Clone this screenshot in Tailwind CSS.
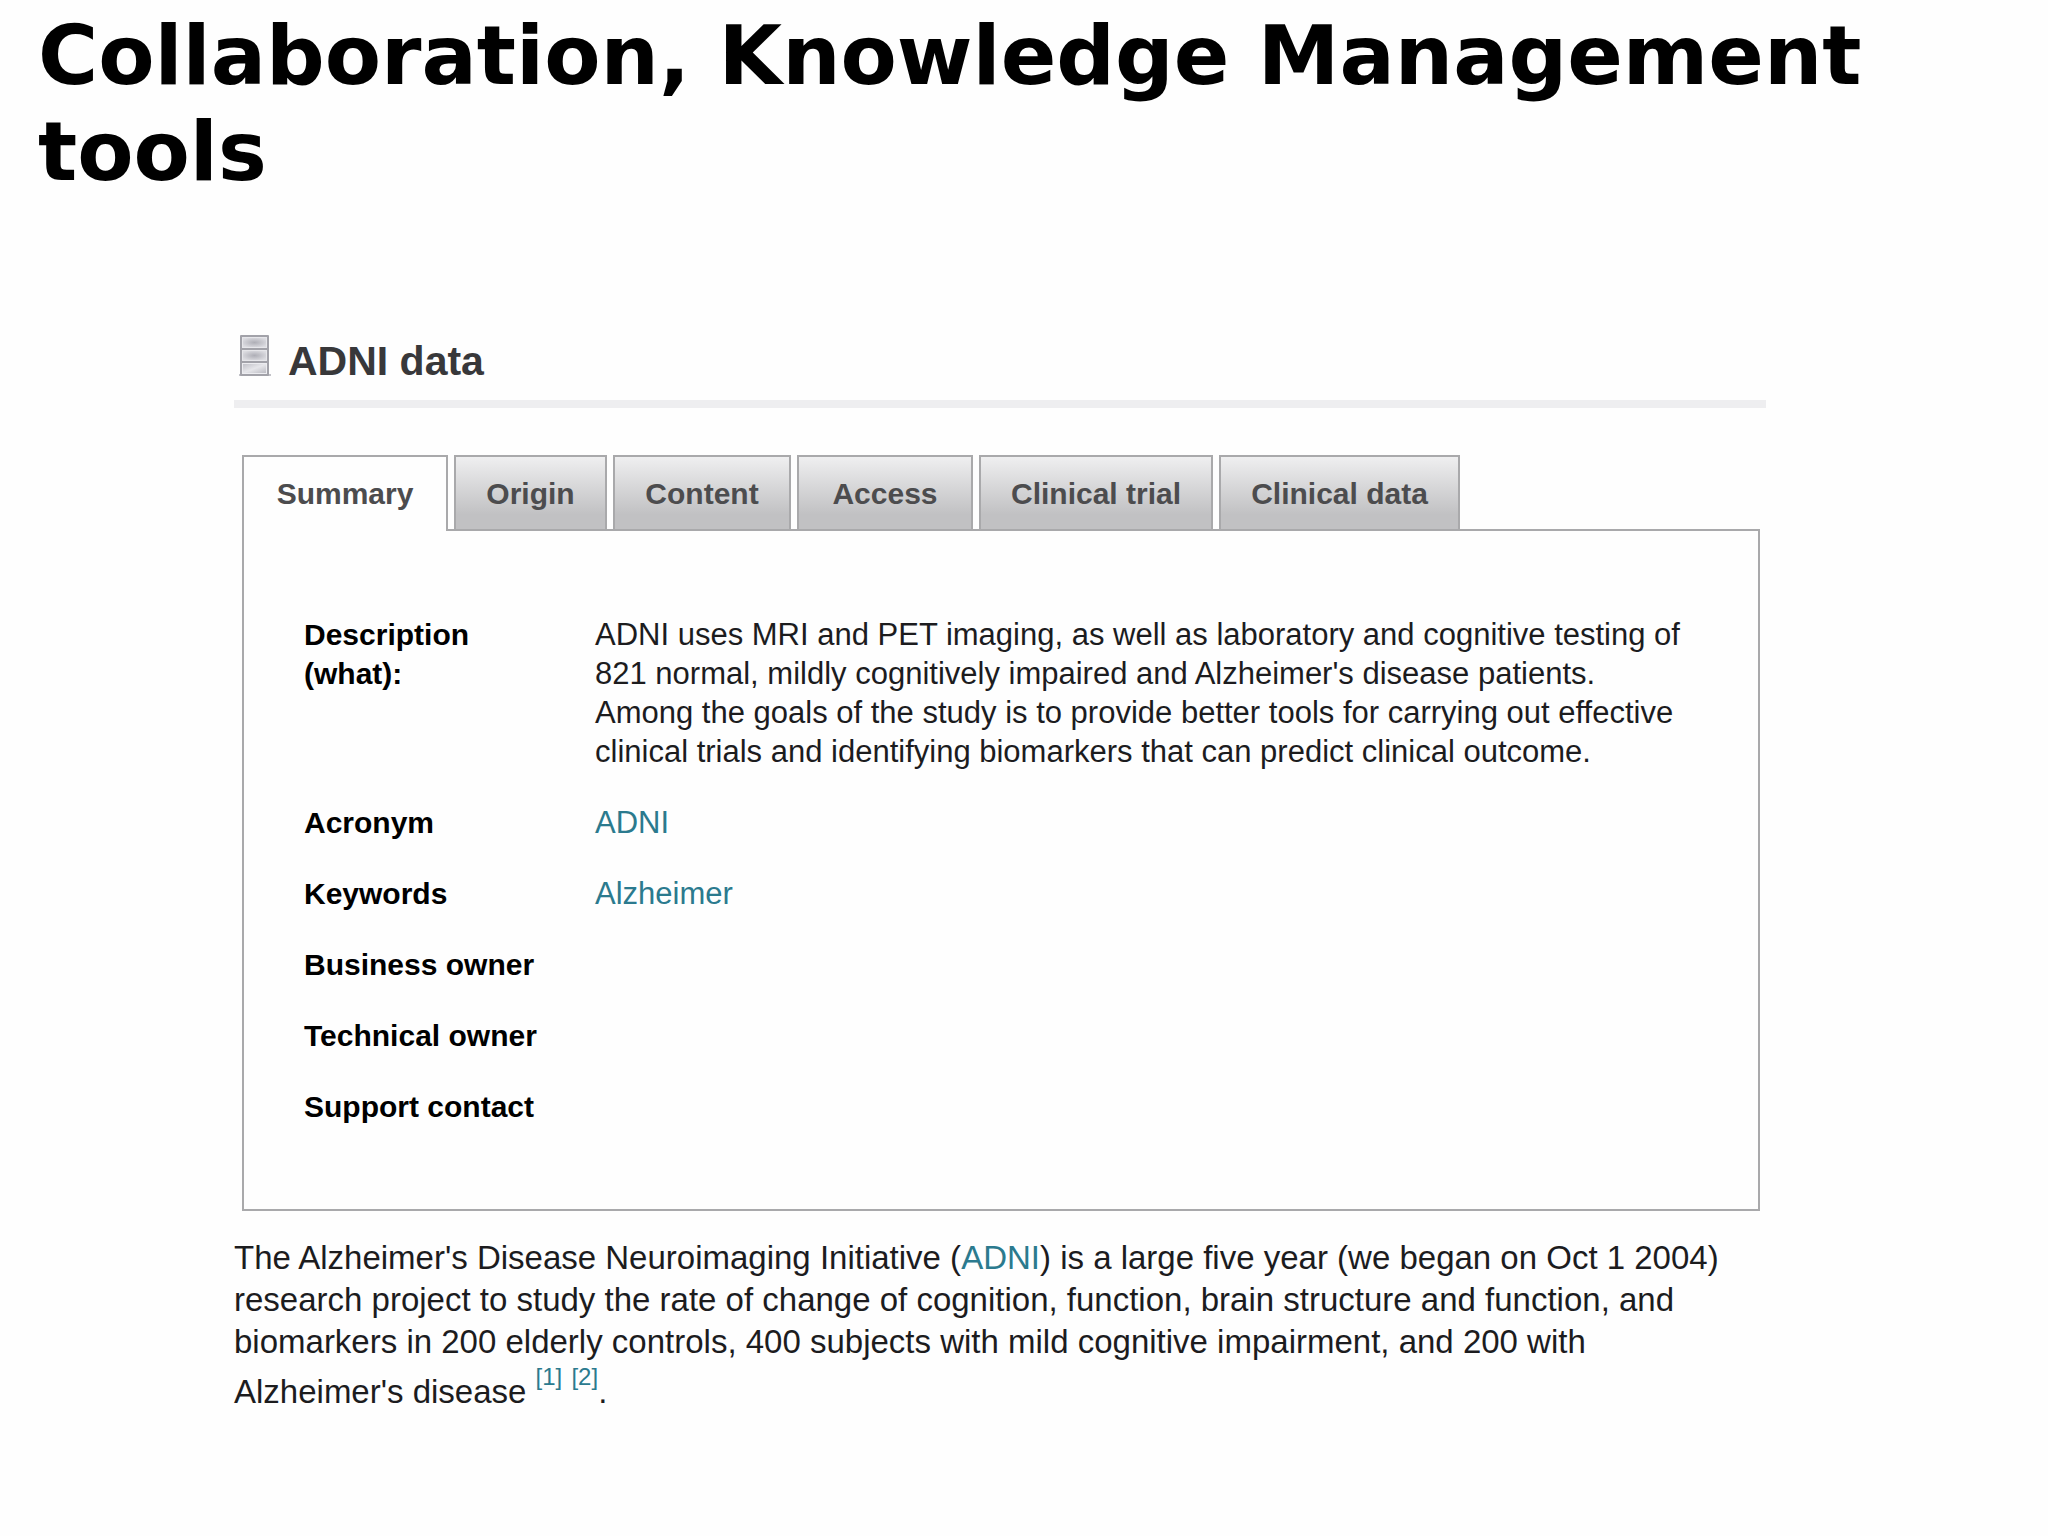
<!DOCTYPE html>
<html lang="en">
<head>
<meta charset="utf-8">
<meta name="viewport" content="width=device-width, initial-scale=1">
<title>Collaboration, Knowledge Management tools</title>
<script src="https://cdn.jsdelivr.net/npm/@tailwindcss/browser@4"></script>
</head>
<body class="min-h-screen bg-[#fefefe] font-['Liberation_Sans',Arial,sans-serif] text-[#1c1c1e]">
<header class="pt-2 pl-[38px] pr-[120px]">
  <h1 class="font-['DejaVu_Sans',Verdana,sans-serif] text-[82px] leading-[96px] font-bold text-black">Collaboration, Knowledge Management tools</h1>
</header>
<main class="pt-[128px] pr-[282px] pb-16 pl-[234px]">
  <div class="flex h-[80px] items-start gap-[17px] border-b-8 border-[#eeeef0] pl-[5px]">
    <svg class="mt-[6px] h-[44px] w-[32px] shrink-0" viewBox="0 0 32 44" aria-hidden="true">
      <defs>
        <radialGradient id="drawer" cx=".5" cy=".5" r=".6">
          <stop offset="0" stop-color="#aeaeb6"/><stop offset="1" stop-color="#dcdce1"/>
        </radialGradient>
        <linearGradient id="drawerLight" x1="0" y1="0" x2="1" y2="1">
          <stop offset="0" stop-color="#c2c2c9"/><stop offset=".5" stop-color="#e6e6ea"/><stop offset="1" stop-color="#bcbcc3"/>
        </linearGradient>
      </defs>
      <path d="M0 40h32v2H0z" fill="#c2c2c8"/>
      <rect x="1" y="1" width="29" height="41" rx="1" fill="#a2a2a9"/>
      <rect x="3" y="3" width="25" height="11" fill="#e6e6ea"/>
      <rect x="4" y="4" width="23" height="9" fill="url(#drawer)"/>
      <rect x="3" y="16" width="25" height="11" fill="#e6e6ea"/>
      <rect x="4" y="17" width="23" height="9" fill="url(#drawer)"/>
      <rect x="3" y="29" width="25" height="11" fill="#ececf0"/>
      <rect x="4" y="30" width="23" height="9" fill="url(#drawerLight)"/>
    </svg>
    <h2 class="text-[41px] leading-[66px] font-bold text-[#38383a]">ADNI data</h2>
  </div>
  <div class="mt-[47px] mr-[6px] ml-2">
    <div class="flex gap-[6px]" role="tablist" aria-label="ADNI data sections">
      <button type="button" role="tab" id="tab-summary" aria-selected="true" aria-controls="summary" class="z-10 -mb-[2px] h-[76px] w-[206px] border-2 border-b-0 border-[#a9a9ab] bg-[#fefefe] pb-[2px] text-[30px] font-bold text-[#4c4c4e]">Summary</button>
      <button type="button" role="tab" aria-selected="false" class="h-[74px] w-[153px] border-2 border-b-0 border-[#a9a9ab] bg-linear-to-b from-[#efeff0] to-[#c1c1c3] to-80% text-[30px] font-bold text-[#4c4c4e]">Origin</button>
      <button type="button" role="tab" aria-selected="false" class="h-[74px] w-[178px] border-2 border-b-0 border-[#a9a9ab] bg-linear-to-b from-[#efeff0] to-[#c1c1c3] to-80% text-[30px] font-bold text-[#4c4c4e]">Content</button>
      <button type="button" role="tab" aria-selected="false" class="h-[74px] w-[176px] border-2 border-b-0 border-[#a9a9ab] bg-linear-to-b from-[#efeff0] to-[#c1c1c3] to-80% text-[30px] font-bold text-[#4c4c4e]">Access</button>
      <button type="button" role="tab" aria-selected="false" class="h-[74px] w-[234px] border-2 border-b-0 border-[#a9a9ab] bg-linear-to-b from-[#efeff0] to-[#c1c1c3] to-80% text-[30px] font-bold text-[#4c4c4e]">Clinical trial</button>
      <button type="button" role="tab" aria-selected="false" class="h-[74px] w-[241px] border-2 border-b-0 border-[#a9a9ab] bg-linear-to-b from-[#efeff0] to-[#c1c1c3] to-80% text-[30px] font-bold text-[#4c4c4e]">Clinical data</button>
    </div>
    <section id="summary" role="tabpanel" aria-labelledby="tab-summary" class="border-2 border-[#a9a9ab] pt-[68px] pr-[64px] pb-[67px] pl-[60px]">
      <table class="w-full table-fixed text-left text-[30px] leading-[39px]">
        <colgroup><col class="w-[291px]"><col></colgroup>
        <tbody class="align-top">
          <tr><th scope="row" class="py-4 pr-[80px] text-black">Description (what):</th><td class="py-4 text-[31px]">ADNI uses MRI and PET imaging, as well as laboratory and cognitive testing of 821 normal, mildly cognitively impaired and Alzheimer's disease patients. Among the goals of the study is to provide better tools for carrying out effective clinical trials and identifying biomarkers that can predict clinical outcome.</td></tr>
          <tr><th scope="row" class="py-4 text-black">Acronym</th><td class="py-4 text-[31px]"><a href="#" class="text-[#2b7a8e]">ADNI</a></td></tr>
          <tr><th scope="row" class="py-4 text-black">Keywords</th><td class="py-4 text-[31px]"><a href="#" class="text-[#2b7a8e]">Alzheimer</a></td></tr>
          <tr><th scope="row" class="py-4 text-black">Business owner</th><td></td></tr>
          <tr><th scope="row" class="py-4 text-black">Technical owner</th><td></td></tr>
          <tr><th scope="row" class="py-4 text-black">Support contact</th><td></td></tr>
        </tbody>
      </table>
    </section>
  </div>
  <p class="mt-[26px] pr-10 text-[33px] leading-[42px]">The Alzheimer's Disease Neuroimaging Initiative (<a href="#" class="text-[#2b7a8e]">ADNI</a>) is a large five year (we began on Oct 1 2004) research project to study the rate of change of cognition, function, brain structure and function, and biomarkers in 200 elderly controls, 400 subjects with mild cognitive impairment, and 200 with Alzheimer's disease <sup class="static align-[18px] text-[24px] leading-[28px]"><a href="#" class="text-[#2b7a8e]">[1]</a></sup> <sup class="static align-[18px] text-[24px] leading-[28px]"><a href="#" class="text-[#2b7a8e]">[2]</a></sup>.</p>
</main>
</body>
</html>
